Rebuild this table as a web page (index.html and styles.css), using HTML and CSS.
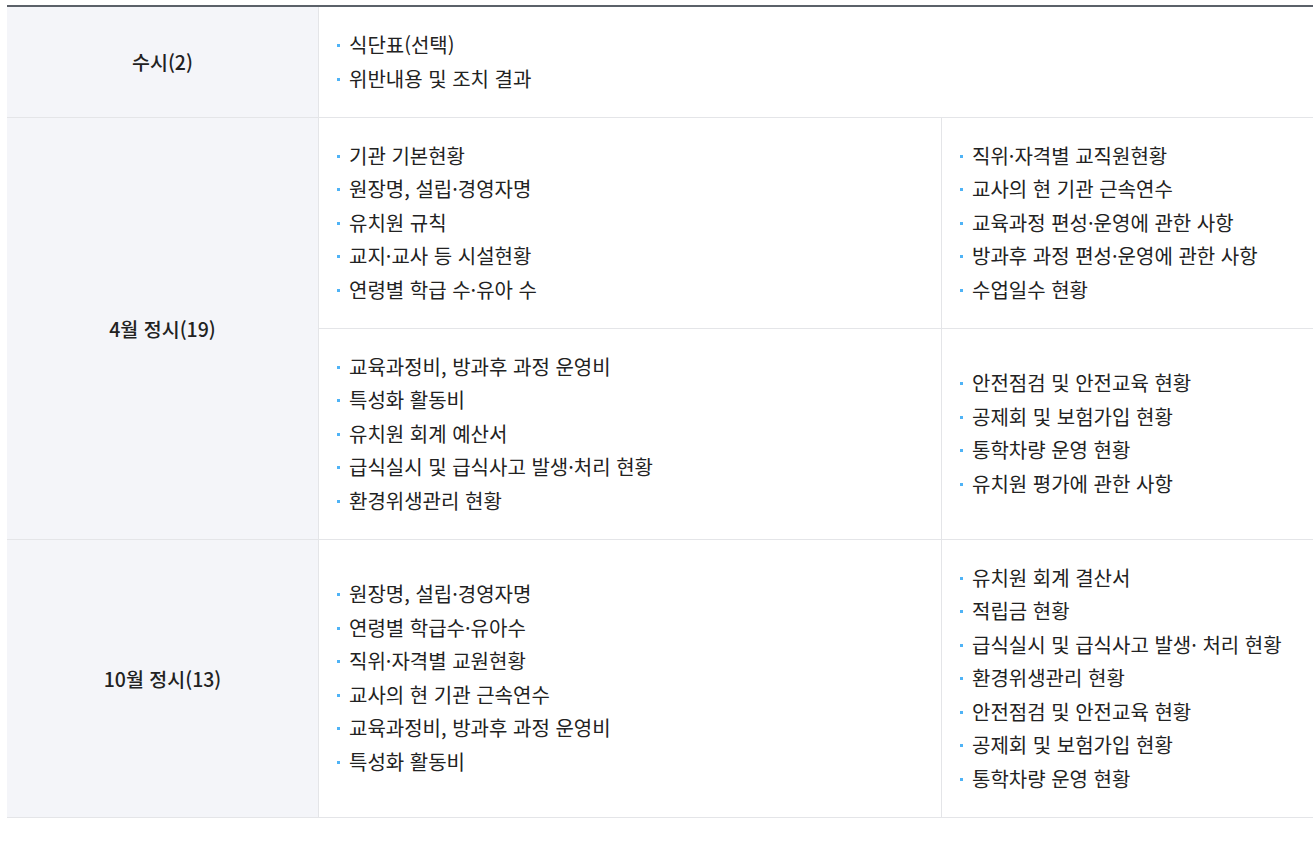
FILE: index.html
```html
<!DOCTYPE html>
<html lang="ko">
<head>
  <meta charset="UTF-8">
  <title>정보공시 항목</title>
  <link rel="stylesheet" href="styles.css">
</head>
<body>
  <div class="wrap">
    <table class="disclosure">
      <colgroup>
        <col class="col-head">
        <col class="col-left">
        <col class="col-right">
      </colgroup>
      <tbody>
        <tr>
          <th>수시(2)</th>
          <td colspan="2">
            <ul class="items">
              <li>식단표(선택)</li>
              <li>위반내용 및 조치 결과</li>
            </ul>
          </td>
        </tr>
        <tr>
          <th rowspan="2">4월 정시(19)</th>
          <td>
            <ul class="items">
              <li>기관 기본현황</li>
              <li>원장명, 설립·경영자명</li>
              <li>유치원 규칙</li>
              <li>교지·교사 등 시설현황</li>
              <li>연령별 학급 수·유아 수</li>
            </ul>
          </td>
          <td>
            <ul class="items">
              <li>직위·자격별 교직원현황</li>
              <li>교사의 현 기관 근속연수</li>
              <li>교육과정 편성·운영에 관한 사항</li>
              <li>방과후 과정 편성·운영에 관한 사항</li>
              <li>수업일수 현황</li>
            </ul>
          </td>
        </tr>
        <tr>
          <td>
            <ul class="items">
              <li>교육과정비, 방과후 과정 운영비</li>
              <li>특성화 활동비</li>
              <li>유치원 회계 예산서</li>
              <li>급식실시 및 급식사고 발생·처리 현황</li>
              <li>환경위생관리 현황</li>
            </ul>
          </td>
          <td>
            <ul class="items">
              <li>안전점검 및 안전교육 현황</li>
              <li>공제회 및 보험가입 현황</li>
              <li>통학차량 운영 현황</li>
              <li>유치원 평가에 관한 사항</li>
            </ul>
          </td>
        </tr>
        <tr>
          <th>10월 정시(13)</th>
          <td>
            <ul class="items">
              <li>원장명, 설립·경영자명</li>
              <li>연령별 학급수·유아수</li>
              <li>직위·자격별 교원현황</li>
              <li>교사의 현 기관 근속연수</li>
              <li>교육과정비, 방과후 과정 운영비</li>
              <li>특성화 활동비</li>
            </ul>
          </td>
          <td>
            <ul class="items">
              <li>유치원 회계 결산서</li>
              <li>적립금 현황</li>
              <li>급식실시 및 급식사고 발생· 처리 현황</li>
              <li>환경위생관리 현황</li>
              <li>안전점검 및 안전교육 현황</li>
              <li>공제회 및 보험가입 현황</li>
              <li>통학차량 운영 현황</li>
            </ul>
          </td>
        </tr>
      </tbody>
    </table>
  </div>
</body>
</html>
```

FILE: styles.css
```css
body {
  margin: 0;
  background: #fff;
  font-family: 'Noto Sans CJK KR', 'Noto Sans', sans-serif;
  color: #222;
  overflow: hidden;
}

.wrap {
  padding: 5px 0 0 7px;
}

.disclosure {
  width: 1340px;
  border-collapse: separate;
  border-spacing: 0;
  border-top: 2px solid #5b6169;
  table-layout: fixed;
  font-size: 20px;
}

.col-head {
  width: 311px;
}

.col-left {
  width: 623px;
}

.disclosure th {
  background: #f4f5f9;
  font-size: 19.5px;
  font-weight: 500;
  text-align: center;
  vertical-align: middle;
  border-bottom: 1px solid #e4e5e8;
  padding: 0;
}

.disclosure td {
  border-left: 1px solid #e4e5e8;
  border-bottom: 1px solid #e4e5e8;
  padding: 21px 18px 21.5px;
  vertical-align: middle;
}

.items {
  list-style: none;
  margin: 0;
  padding: 0;
}

.items li {
  position: relative;
  padding-left: 12px;
  line-height: 33.5px;
}

.items li::before {
  content: "";
  position: absolute;
  left: 0;
  top: 16px;
  width: 3px;
  height: 3px;
  background: #4fb3f6;
}
```
